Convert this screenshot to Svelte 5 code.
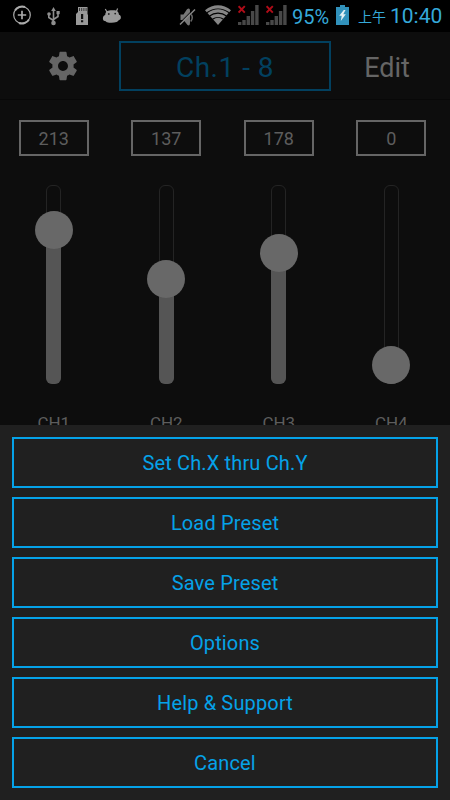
<script lang="ts">
	const channels = [
		{ name: 'CH1', value: 213, knob: 25 },
		{ name: 'CH2', value: 137, knob: 73.5 },
		{ name: 'CH3', value: 178, knob: 47.5 },
		{ name: 'CH4', value: 0, knob: 160 }
	];

	const actions = [
		'Set Ch.X thru Ch.Y',
		'Load Preset',
		'Save Preset',
		'Options',
		'Help & Support',
		'Cancel'
	];

	let open = true;
</script>

<div class="screen">
	<div class="status">
		<svg class="plus" width="20" height="20" viewBox="0 0 20 20" fill="none" stroke="#aaa">
			<circle cx="10" cy="10" r="8.3" stroke-width="1.2" />
			<path d="M3 5.5A8.3 8.3 0 0 1 13 2M17 14.5A8.3 8.3 0 0 1 7 18" stroke-width="2" />
			<path d="M10 5.8v8.4M5.8 10h8.4" stroke-width="1.7" />
		</svg>
		<svg class="usb" width="13" height="19" viewBox="0 0 13 19">
			<path d="M6.5 3v13M6.5 13.5L1.8 10.5V7M6.5 12.5L11 9.5V6" fill="none" stroke="#8e8e8e" stroke-width="1.6" />
			<path d="M6.5 0L8.8 4H4.2z" fill="#8e8e8e" />
			<circle cx="6.5" cy="16" r="2.3" fill="#8e8e8e" />
			<circle cx="2" cy="7" r="1.8" fill="#8e8e8e" />
			<path d="M9.5 4h3.2v3.2H9.5z" fill="#8e8e8e" />
		</svg>
		<svg class="sd" width="12" height="18" viewBox="0 0 12 18">
			<path d="M2 0h9.5v7l.5 1v10H0V7l2-2V0z" fill="#999" />
			<path d="M3.5 1v3M5.7 1v3M7.9 1v3M10.1 1v3" stroke="#222" stroke-width=".8" />
			<path d="M5 7h2.2v5H5zM5 13.3h2.2v2H5z" fill="#111" />
		</svg>
		<svg class="droid" width="20" height="16" viewBox="0 0 20 16">
			<path d="M3.3 1l2.2 4M15.6 .6L14.2 4" stroke="#999" stroke-width="1.2" />
			<path
				d="M3.2 7C3.6 3 6 2.3 10 2.3S16.4 2.4 17 6.8c2.2.2 2.6 4.4.6 5-1.4.3-1.4 1.6-3 2.2-3 1-7 .9-9.6.2-1-.3-1-1.2-2-1.2-2.6.3-3-5.4.2-6z"
				fill="#999"
			/>
			<circle cx="6.8" cy="6" r=".9" fill="#222" />
			<circle cx="13.2" cy="5.6" r=".9" fill="#222" />
		</svg>
		<svg class="mute" width="17" height="18" viewBox="0 0 17 18">
			<path d="M1.5 6.5h3L8 1.2c2-1.4 3-.4 3 1.6v11.7c0 3-1 3.3-2.5 2.5L4.5 12h-3z" fill="#777" />
			<path d="M12.2 6.5c1.5 2 1 5-.5 7" fill="none" stroke="#666" stroke-width="1.5" />
			<path d="M0 15.7L15 .7" stroke="#000" stroke-width="1" />
			<path d="M1 16.5L16 1.5" stroke="#888" stroke-width="1.5" />
		</svg>
		<svg class="wifi" width="26" height="20" viewBox="0 0 26 20">
			<path d="M0 5.2C8-1.4 18-1.4 26 5.2L13 20z" fill="#858585" />
			<path
				d="M1.8 7.8c7-5 15.4-5 22.4 0M4.5 11c5-3.8 12-3.8 17 0M7.5 14.3c3.2-2.4 7.8-2.4 11 0"
				fill="none"
				stroke="#000"
				stroke-width="1.1"
			/>
		</svg>
		{#each [0, 1] as sim (sim)}
			<svg class="signal" width="21" height="20" viewBox="0 0 21 20">
				<path d="M0 17h3.4v3H0zM4.3 15h3.4v5H4.3zM8.6 11H12v9H8.6zM12.9 6h3.4v14h-3.4zM17.2 0h3.4v20h-3.4z" fill="#484848" />
				<path d="M.6 1.2l6.2 6.4M6.8 1.2L.6 7.6" stroke="#b00c18" stroke-width="1.9" />
			</svg>
		{/each}
		<span class="percent">95%</span>
		<svg class="battery" width="13" height="20" viewBox="0 0 13 20">
			<path d="M4 0h5v2h4v18H0V2h4z" fill="#3191bb" />
			<path d="M7.8 5L3.2 10.7h2.5L4.8 16l5-6.7H7.3L9.5 5z" fill="#e2f1f5" />
		</svg>
		<span class="ampm">上午</span>
		<span class="time">10:40</span>
	</div>

	<header>
		<button class="gear" aria-label="Settings">
			<svg width="34" height="34" viewBox="0 0 24 24" fill="#656565">
				<path
					d="M19.43 12.98c.04-.32.07-.64.07-.98s-.03-.66-.07-.98l2.11-1.65c.19-.15.24-.42.12-.64l-2-3.46c-.12-.22-.39-.3-.61-.22l-2.49 1c-.52-.4-1.08-.73-1.69-.98l-.38-2.65C14.46 2.18 14.25 2 14 2h-4c-.25 0-.46.18-.49.42l-.38 2.65c-.61.25-1.17.59-1.69.98l-2.49-1c-.23-.09-.49 0-.61.22l-2 3.46c-.13.22-.07.49.12.64l2.11 1.65c-.04.32-.07.65-.07.98s.03.66.07.98l-2.11 1.65c-.19.15-.24.42-.12.64l2 3.46c.12.22.39.3.61.22l2.49-1c.52.4 1.08.73 1.69.98l.38 2.65c.03.24.24.42.49.42h4c.25 0 .46-.18.49-.42l.38-2.65c.61-.25 1.17-.59 1.69-.98l2.49 1c.23.09.49 0 .61-.22l2-3.46c.12-.22.07-.49-.12-.64l-2.11-1.65zM12 15.5c-1.93 0-3.5-1.57-3.5-3.5s1.57-3.5 3.5-3.5 3.5 1.57 3.5 3.5-1.57 3.5-3.5 3.5z"
				/>
			</svg>
		</button>
		<button class="range">Ch.1 - 8</button>
		<button class="edit">Edit</button>
	</header>

	<div class="faders">
		{#each channels as channel (channel.name)}
			<div class="channel">
				<div class="value">{channel.value}</div>
				<div class="track">
					<div class="fill" style="top: {channel.knob + 19}px"></div>
					<div class="knob" style="top: {channel.knob}px"></div>
				</div>
				<div class="name">{channel.name}</div>
			</div>
		{/each}
	</div>

	{#if open}
		<div class="sheet">
			{#each actions as action (action)}
				<button on:click={() => (open = false)}>{action}</button>
			{/each}
		</div>
	{/if}
</div>

<style>
	:global(body) {
		margin: 0;
		background: #0d0d0d;
	}

	.screen {
		position: relative;
		width: 450px;
		height: 800px;
		overflow: hidden;
		background: #0d0d0d;
		font-family: Roboto, 'Noto Sans CJK TC', sans-serif;
	}

	button {
		margin: 0;
		padding: 0;
		border: none;
		background: none;
		font-family: inherit;
		cursor: pointer;
	}

	.status {
		display: flex;
		align-items: flex-start;
		height: 32px;
		background: #000;
		color: #35a9da;
		white-space: nowrap;
	}

	.status svg {
		flex: none;
		margin-top: 5px;
	}

	.status .plus {
		margin-left: 12px;
	}

	.status .usb {
		margin: 7px 0 0 15px;
	}

	.status .sd {
		margin: 7px 0 0 16px;
	}

	.status .droid {
		margin: 8px 0 0 14px;
	}

	.status .mute {
		margin: 8px 0 0 57px;
	}

	.status .wifi {
		margin-left: 9px;
	}

	.status .signal {
		margin-left: 7px;
	}

	.percent {
		width: 38px;
		margin: 5px 0 0 5px;
		font-size: 20px;
		line-height: 24px;
	}

	.status .battery {
		margin-left: 6px;
	}

	.ampm {
		width: 28px;
		margin: 7px 0 0 9px;
		font-size: 14px;
		line-height: 20px;
	}

	.time {
		margin: 4px 0 0 4px;
		font-size: 21px;
		line-height: 24px;
	}

	header {
		display: flex;
		align-items: center;
		box-sizing: border-box;
		height: 68px;
		border-bottom: 1px solid #080808;
		color: #656565;
	}

	.gear {
		display: flex;
		justify-content: center;
		width: 119px;
		padding-left: 6px;
		box-sizing: border-box;
	}

	.range {
		width: 212px;
		height: 50px;
		padding-top: 3px;
		border: 2px solid #02405f;
		color: #02405f;
		font-size: 28px;
		letter-spacing: 0.5px;
	}

	.edit {
		width: 112px;
		padding-top: 4px;
		color: #656565;
		font-size: 27px;
	}

	.faders {
		display: grid;
		grid-template-columns: repeat(4, 112.5px);
		margin-left: -2.5px;
	}

	.channel {
		display: flex;
		flex-direction: column;
		align-items: center;
		color: #5d5d5d;
	}

	.value {
		box-sizing: border-box;
		width: 70px;
		height: 36px;
		margin-top: 20px;
		border: 2px solid #656565;
		font-size: 18px;
		line-height: 34px;
		text-align: center;
		letter-spacing: 0.1px;
	}

	.track {
		position: relative;
		box-sizing: border-box;
		width: 15px;
		height: 199px;
		margin-top: 29px;
		border: 1px solid #242424;
		border-radius: 6px;
	}

	.fill {
		position: absolute;
		left: -1px;
		right: -1px;
		bottom: -1px;
		background: #555;
		border-radius: 0 0 6px 6px;
	}

	.knob {
		position: absolute;
		left: -12.5px;
		width: 38px;
		height: 38px;
		border-radius: 50%;
		background: #686868;
	}

	.name {
		margin-top: 28px;
		font-size: 17px;
		line-height: 22px;
	}

	.sheet {
		position: absolute;
		left: 0;
		right: 0;
		bottom: 0;
		display: flex;
		flex-direction: column;
		gap: 9px;
		box-sizing: border-box;
		height: 375px;
		padding: 12px;
		background: #202020;
	}

	.sheet button {
		flex: none;
		height: 51px;
		border: 2px solid #05a2e8;
		color: #05a2e8;
		font-size: 20px;
		letter-spacing: 0.15px;
	}
</style>
